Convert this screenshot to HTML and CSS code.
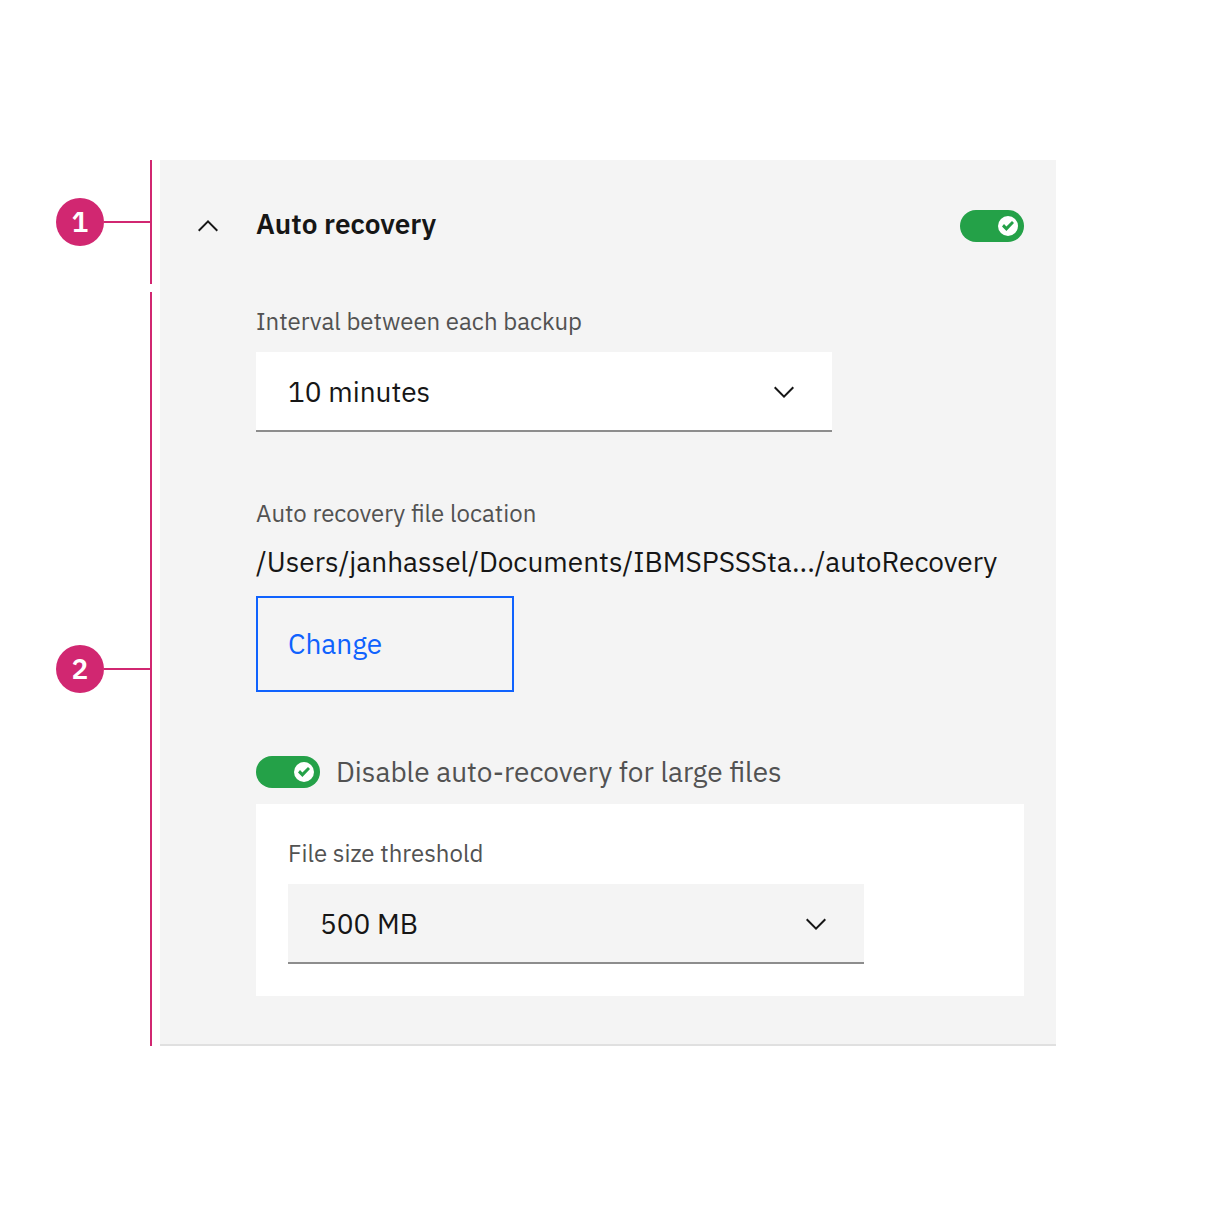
FILE: index.html
```html
<!DOCTYPE html>
<html lang="en">
<head>
<meta charset="utf-8">
<meta name="viewport" content="width=device-width, initial-scale=1">
<title>Auto recovery</title>
<link rel="stylesheet" href="styles.css">
</head>
<body>
<main class="anatomy">
  <div class="marker marker-header">
    <span class="badge">1</span>
    <span class="lead"></span>
  </div>
  <header class="panel-header">
    <button class="collapse" type="button" aria-label="Collapse" aria-expanded="true">
      <svg class="icon" viewBox="0 0 32 32" aria-hidden="true"><path d="M16 10L26 20 24.6 21.4 16 12.8 7.4 21.4 6 20z"/></svg>
    </button>
    <h1 class="title"><label for="auto-recovery">Auto recovery</label></h1>
    <span class="toggle">
      <input class="toggle-input" type="checkbox" role="switch" id="auto-recovery" checked>
      <svg class="toggle-mark" viewBox="0 0 64 32" aria-hidden="true"><circle class="knob" cx="48" cy="16" r="10"/><path class="check" d="M46.4 16.4L52 11 54 13 46.4 21 42 16.4 44 14z"/></svg>
    </span>
  </header>

  <div class="marker">
    <span class="badge">2</span>
    <span class="lead"></span>
  </div>
  <section class="panel-body">
    <div class="group">
      <label class="label" for="interval">Interval between each backup</label>
      <span class="dropdown">
        <select class="select" id="interval"><option>10 minutes</option></select>
        <svg class="icon chevron" viewBox="0 0 32 32" aria-hidden="true"><path d="M16 22L6 12 7.4 10.6 16 19.2 24.6 10.6 26 12z"/></svg>
      </span>
    </div>
    <div class="group">
      <span class="label">Auto recovery file location</span>
      <span class="path">/Users/janhassel/Documents/IBMSPSSSta.../autoRecovery</span>
      <button class="change" type="button">Change</button>
    </div>
    <div class="group">
      <div class="toggle-row">
        <span class="toggle">
          <input class="toggle-input" type="checkbox" role="switch" id="large-files" checked>
          <svg class="toggle-mark" viewBox="0 0 64 32" aria-hidden="true"><circle class="knob" cx="48" cy="16" r="10"/><path class="check" d="M46.4 16.4L52 11 54 13 46.4 21 42 16.4 44 14z"/></svg>
        </span>
        <label class="toggle-label" for="large-files">Disable auto-recovery for large files</label>
      </div>
      <div class="nested">
        <label class="label" for="threshold">File size threshold</label>
        <span class="dropdown">
          <select class="select select-gray" id="threshold"><option>500 MB</option></select>
          <svg class="icon chevron" viewBox="0 0 32 32" aria-hidden="true"><path d="M16 22L6 12 7.4 10.6 16 19.2 24.6 10.6 26 12z"/></svg>
        </span>
      </div>
    </div>
  </section>
</main>
</body>
</html>
```
FILE: styles.css
```css
:root {
  --magenta: #d12771;
  --text: #161616;
  --text-soft: #525252;
  --layer: #f4f4f4;
  --blue: #0f62fe;
  --green: #24a148;
}

* {
  box-sizing: border-box;
}

body {
  margin: 0;
  background: #fff;
  color: var(--text);
  font: 28px/36px "IBM Plex Sans", "Noto Sans", sans-serif;
}

button,
select {
  font: inherit;
  color: inherit;
}

.anatomy {
  display: grid;
  grid-template-columns: 96px minmax(0, 1fr);
  column-gap: 8px;
  padding: 160px 160px 160px 56px;
}

/* numbered callouts */
.marker {
  display: flex;
  align-items: center;
  border-right: 2px solid var(--magenta);
}

.marker-header {
  margin-bottom: 8px;
}

.badge {
  display: grid;
  place-items: center;
  width: 48px;
  height: 48px;
  border-radius: 50%;
  background: var(--magenta);
  color: #fff;
  font-weight: 600;
}

.lead {
  flex: 1;
  height: 2px;
  background: var(--magenta);
}

/* panel */
.panel-header {
  display: flex;
  align-items: flex-start;
  gap: 32px;
  padding: 50px 32px;
  background: var(--layer);
}

.collapse {
  width: 32px;
  height: 32px;
  padding: 0;
  border: 0;
  background: none;
}

.title {
  flex: 1;
  margin: 0;
  font-size: 28px;
  font-weight: 600;
  line-height: 28px;
}

.panel-body {
  display: flex;
  flex-direction: column;
  gap: 64px;
  padding: 12px 32px 48px 96px;
  border-bottom: 2px solid #e0e0e0;
  background: var(--layer);
}

.group,
.nested {
  display: flex;
  flex-direction: column;
  gap: 16px;
}

.nested {
  padding: 32px;
  background: #fff;
}

.label {
  padding-top: 2px;
  font-size: 24px;
  line-height: 30px;
  color: var(--text-soft);
}

.path {
  white-space: nowrap;
}

.icon {
  display: block;
  width: 32px;
  height: 32px;
  fill: var(--text);
}

/* dropdown: the chevron shares the select's grid cell */
.dropdown {
  display: grid;
  align-items: center;
  width: 100%;
  max-width: 576px;
}

.select {
  grid-area: 1 / 1;
  width: 100%;
  height: 80px;
  padding: 2px 80px 0 32px;
  border: 0;
  border-bottom: 2px solid #8d8d8d;
  border-radius: 0;
  background: #fff;
  appearance: none;
}

.select-gray {
  background: var(--layer);
}

.chevron {
  grid-area: 1 / 1;
  justify-self: end;
  margin-right: 32px;
  pointer-events: none;
}

.change {
  width: 258px;
  height: 96px;
  padding: 0 30px;
  border: 2px solid var(--blue);
  background: none;
  color: var(--blue);
  text-align: left;
}

/* toggle */
.toggle {
  display: grid;
  width: 64px;
  height: 32px;
}

.toggle-input {
  grid-area: 1 / 1;
  width: 64px;
  height: 32px;
  margin: 0;
  border-radius: 16px;
  background: var(--green);
  appearance: none;
}

.toggle-mark {
  grid-area: 1 / 1;
  width: 64px;
  height: 32px;
  pointer-events: none;
}

.knob {
  fill: #fff;
}

.check {
  fill: var(--green);
}

.toggle-row {
  display: flex;
  align-items: center;
  gap: 16px;
}

.toggle-label {
  line-height: 32px;
  color: var(--text-soft);
}
```
